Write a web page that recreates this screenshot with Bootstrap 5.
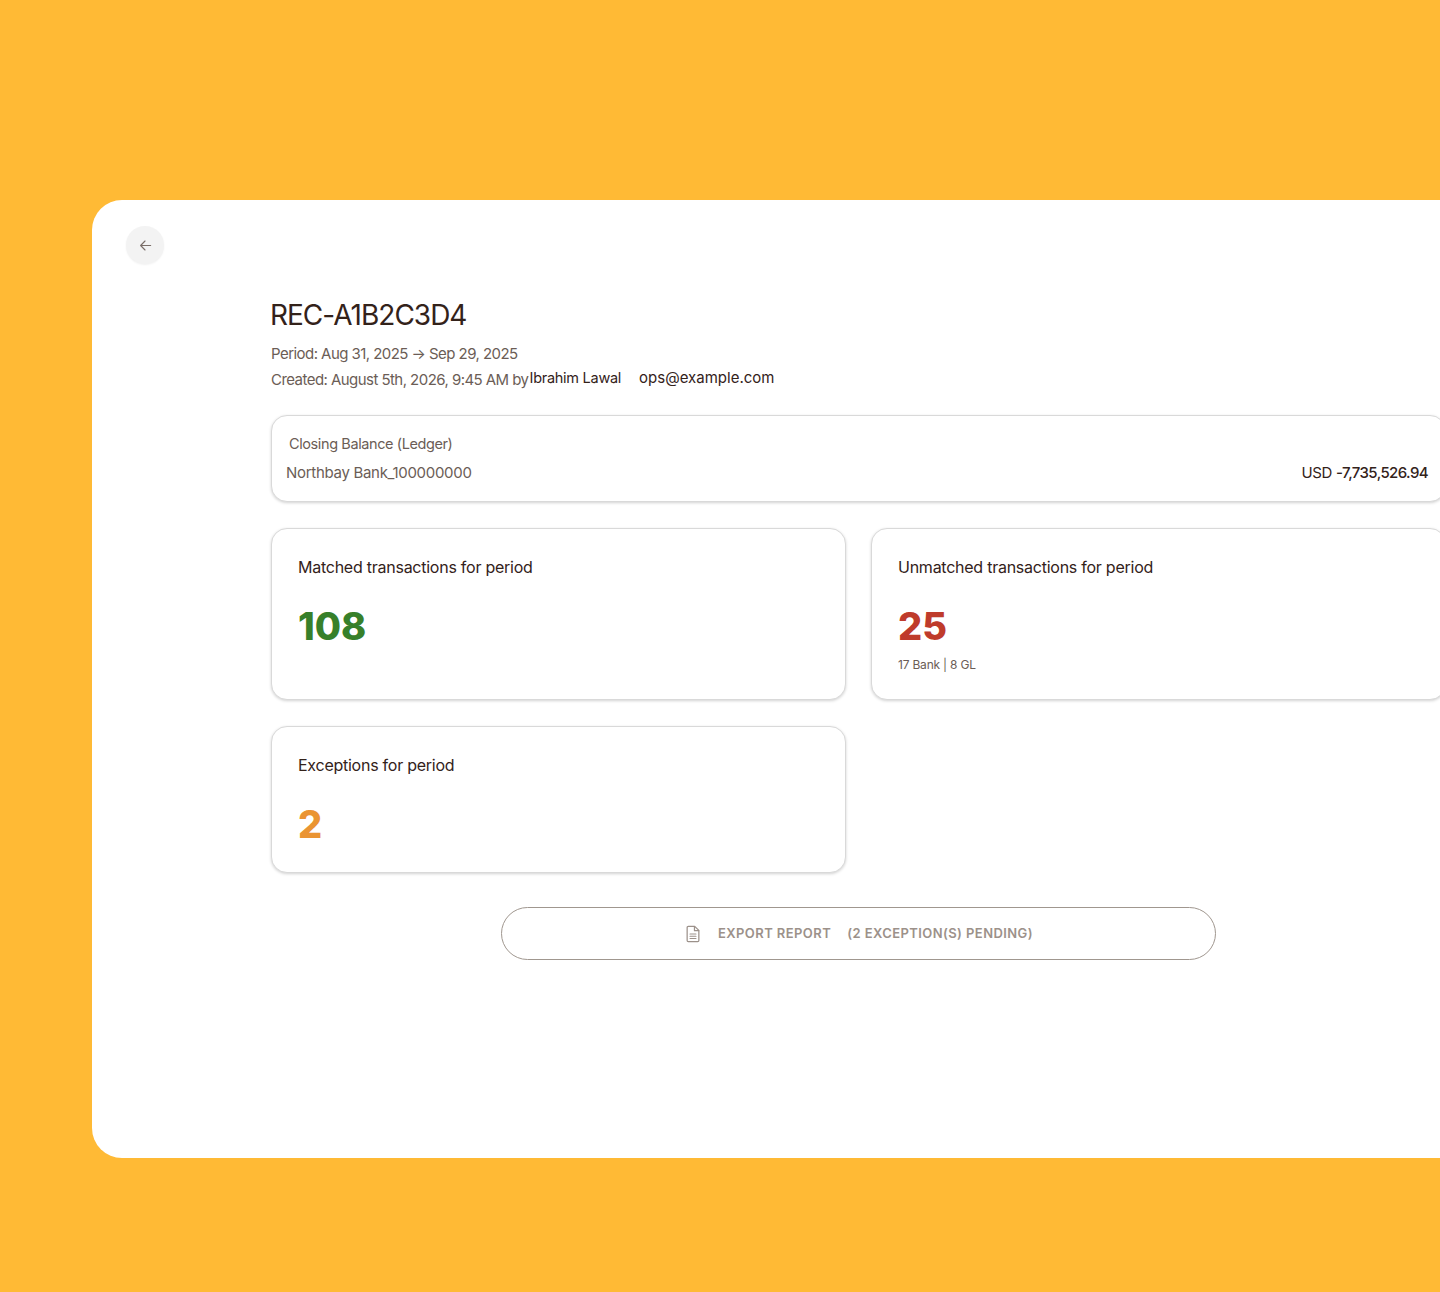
<!DOCTYPE html>
<html lang="en">
<head>
  <meta charset="UTF-8">
  <title>Reconciliation REC-A1B2C3D4</title>
  <meta name="viewport" content="width=device-width, initial-scale=1">
  <link href="https://cdn.jsdelivr.net/npm/bootstrap@5.3.0/dist/css/bootstrap.min.css" rel="stylesheet">
  <style>
    html, body { height: 100%; }
    body {
      background: #ffba35;
      overflow: hidden;
      font-family: "Inter", "Liberation Sans", sans-serif;
      color: #33221a;
    }
    .app-panel {
      width: 1400px;
      height: 958px;
      margin: 200px 0 0 92px;
      padding: 26px 0 0 34px;
      background: #fff;
      border-radius: 30px;
    }
    .back-btn {
      width: 38px;
      height: 38px;
      padding: 0;
      border: 0;
      border-radius: 50%;
      background: #f3f3f3;
      box-shadow: 0 1px 2px rgba(0, 0, 0, .06);
    }
    .report-body {
      width: 1175px;
      margin: 35px 0 0 145px;
    }
    .report-title {
      font-size: 28px;
      line-height: 32px;
      font-weight: 400;
      letter-spacing: -1px;
      margin: 0 0 0 -1px;
    }
    .meta-line {
      font-size: 15px;
      line-height: 26px;
      letter-spacing: -.55px;
      color: #6b5d56;
    }
    .meta-line.first { margin-top: 10px; }
    .meta-who {
      color: #33221a;
      position: relative;
      top: -2px;
    }
    .meta-name { font-size: 14.5px; letter-spacing: -.27px; margin-left: 1px; margin-right: 18px; }
    .meta-mail { font-size: 15px; letter-spacing: 0; }
    .stat-box {
      background: #fff;
      border: 1px solid #d9d9d9;
      border-radius: 16px;
      box-shadow: 0 1px 3px rgba(0, 0, 0, .18);
    }
    .balance-box {
      height: 87px;
      margin-top: 22px;
      padding: 17px 17px 0 14px;
    }
    .balance-label {
      font-size: 14.5px;
      line-height: 22px;
      letter-spacing: -.4px;
      color: #6b5d56;
      margin-left: 3px;
    }
    .balance-row {
      margin-top: 7px;
      font-size: 15px;
      line-height: 22px;
      letter-spacing: -.3px;
      color: #6b5d56;
    }
    .balance-amt { color: #33221a; }
    .balance-amt b { font-weight: 500; letter-spacing: -.6px; }
    .stat-grid {
      display: grid;
      grid-template-columns: 575px 575px;
      gap: 26px 25px;
      margin-top: 26px;
    }
    .stat-tall { height: 172px; }
    .stat-short { height: 147px; }
    .stat-box.stat-tall, .stat-box.stat-short { padding: 26px 26px 0; }
    .stat-title {
      font-size: 16px;
      line-height: 24px;
      letter-spacing: -.25px;
    }
    .stat-num {
      font-size: 38px;
      line-height: 48px;
      font-weight: 800;
      margin-top: 23px;
    }
    .num-green { color: #37802a; }
    .num-red { color: #bf3b2b; }
    .num-orange { color: #ea9433; }
    .stat-note {
      font-size: 12px;
      line-height: 18px;
      letter-spacing: -.2px;
      color: #6b5d56;
      margin-top: 6px;
    }
    .export-btn {
      display: flex;
      width: 715px;
      height: 53px;
      margin: 34px auto 0;
      border: 1px solid #a0978f;
      border-radius: 27px;
      background: #fff;
      color: #9c918a;
      font-size: 13px;
      font-weight: 600;
      letter-spacing: .42px;
    }
    .export-btn:hover { background: #fff; color: #9c918a; border-color: #a0978f; }
  </style>
</head>
<body>
  <main class="app-panel">
    <button type="button" class="btn back-btn d-flex align-items-center justify-content-center" aria-label="Back">
      <svg width="15" height="15" viewBox="0 0 16 16" fill="none" stroke="#7a6e68" stroke-width="1.2" stroke-linecap="round" stroke-linejoin="round">
        <path d="M13.5 8H2.8M7.5 3.2 2.8 8l4.7 4.8"/>
      </svg>
    </button>

    <div class="report-body">
      <h1 class="report-title">REC-A1B2C3D4</h1>
      <div class="meta-line first">Period: Aug 31, 2025 → Sep 29, 2025</div>
      <div class="meta-line">Created: August 5th, 2026, 9:45 AM by<span class="meta-who meta-name">Ibrahim Lawal</span><span class="meta-who meta-mail">ops@example.com</span></div>

      <div class="stat-box balance-box">
        <div class="balance-label">Closing Balance (Ledger)</div>
        <div class="balance-row d-flex justify-content-between">
          <span>Northbay Bank_100000000</span>
          <span class="balance-amt">USD <b>-7,735,526.94</b></span>
        </div>
      </div>

      <div class="stat-grid">
        <div class="stat-box stat-tall">
          <div class="stat-title">Matched transactions for period</div>
          <div class="stat-num num-green">108</div>
        </div>
        <div class="stat-box stat-tall">
          <div class="stat-title">Unmatched transactions for period</div>
          <div class="stat-num num-red">25</div>
          <div class="stat-note">17 Bank | 8 GL</div>
        </div>
        <div class="stat-box stat-short">
          <div class="stat-title">Exceptions for period</div>
          <div class="stat-num num-orange">2</div>
        </div>
      </div>

      <button type="button" class="btn export-btn align-items-center justify-content-center">
        <svg class="export-icon" width="18" height="18" viewBox="0 0 16 16" fill="none" stroke="#9c918a" stroke-width="1.1" stroke-linejoin="round" stroke-linecap="round">
          <path d="M2.8 2.2c0-.6.4-1 1-1h5.7l3.7 3.6v9c0 .6-.4 1-1 1H3.8c-.6 0-1-.4-1-1z"/>
          <path d="M9.3 1.4v3.6h3.7M5.4 8h5.2M5.4 10h5.2M5.4 12h5.2"/>
        </svg>
        <span class="ms-3 me-3">EXPORT REPORT</span>
        <span>(2 EXCEPTION(S) PENDING)</span>
      </button>
    </div>
  </main>

  <script src="https://cdn.jsdelivr.net/npm/bootstrap@5.3.0/dist/js/bootstrap.bundle.min.js"></script>
</body>
</html>
